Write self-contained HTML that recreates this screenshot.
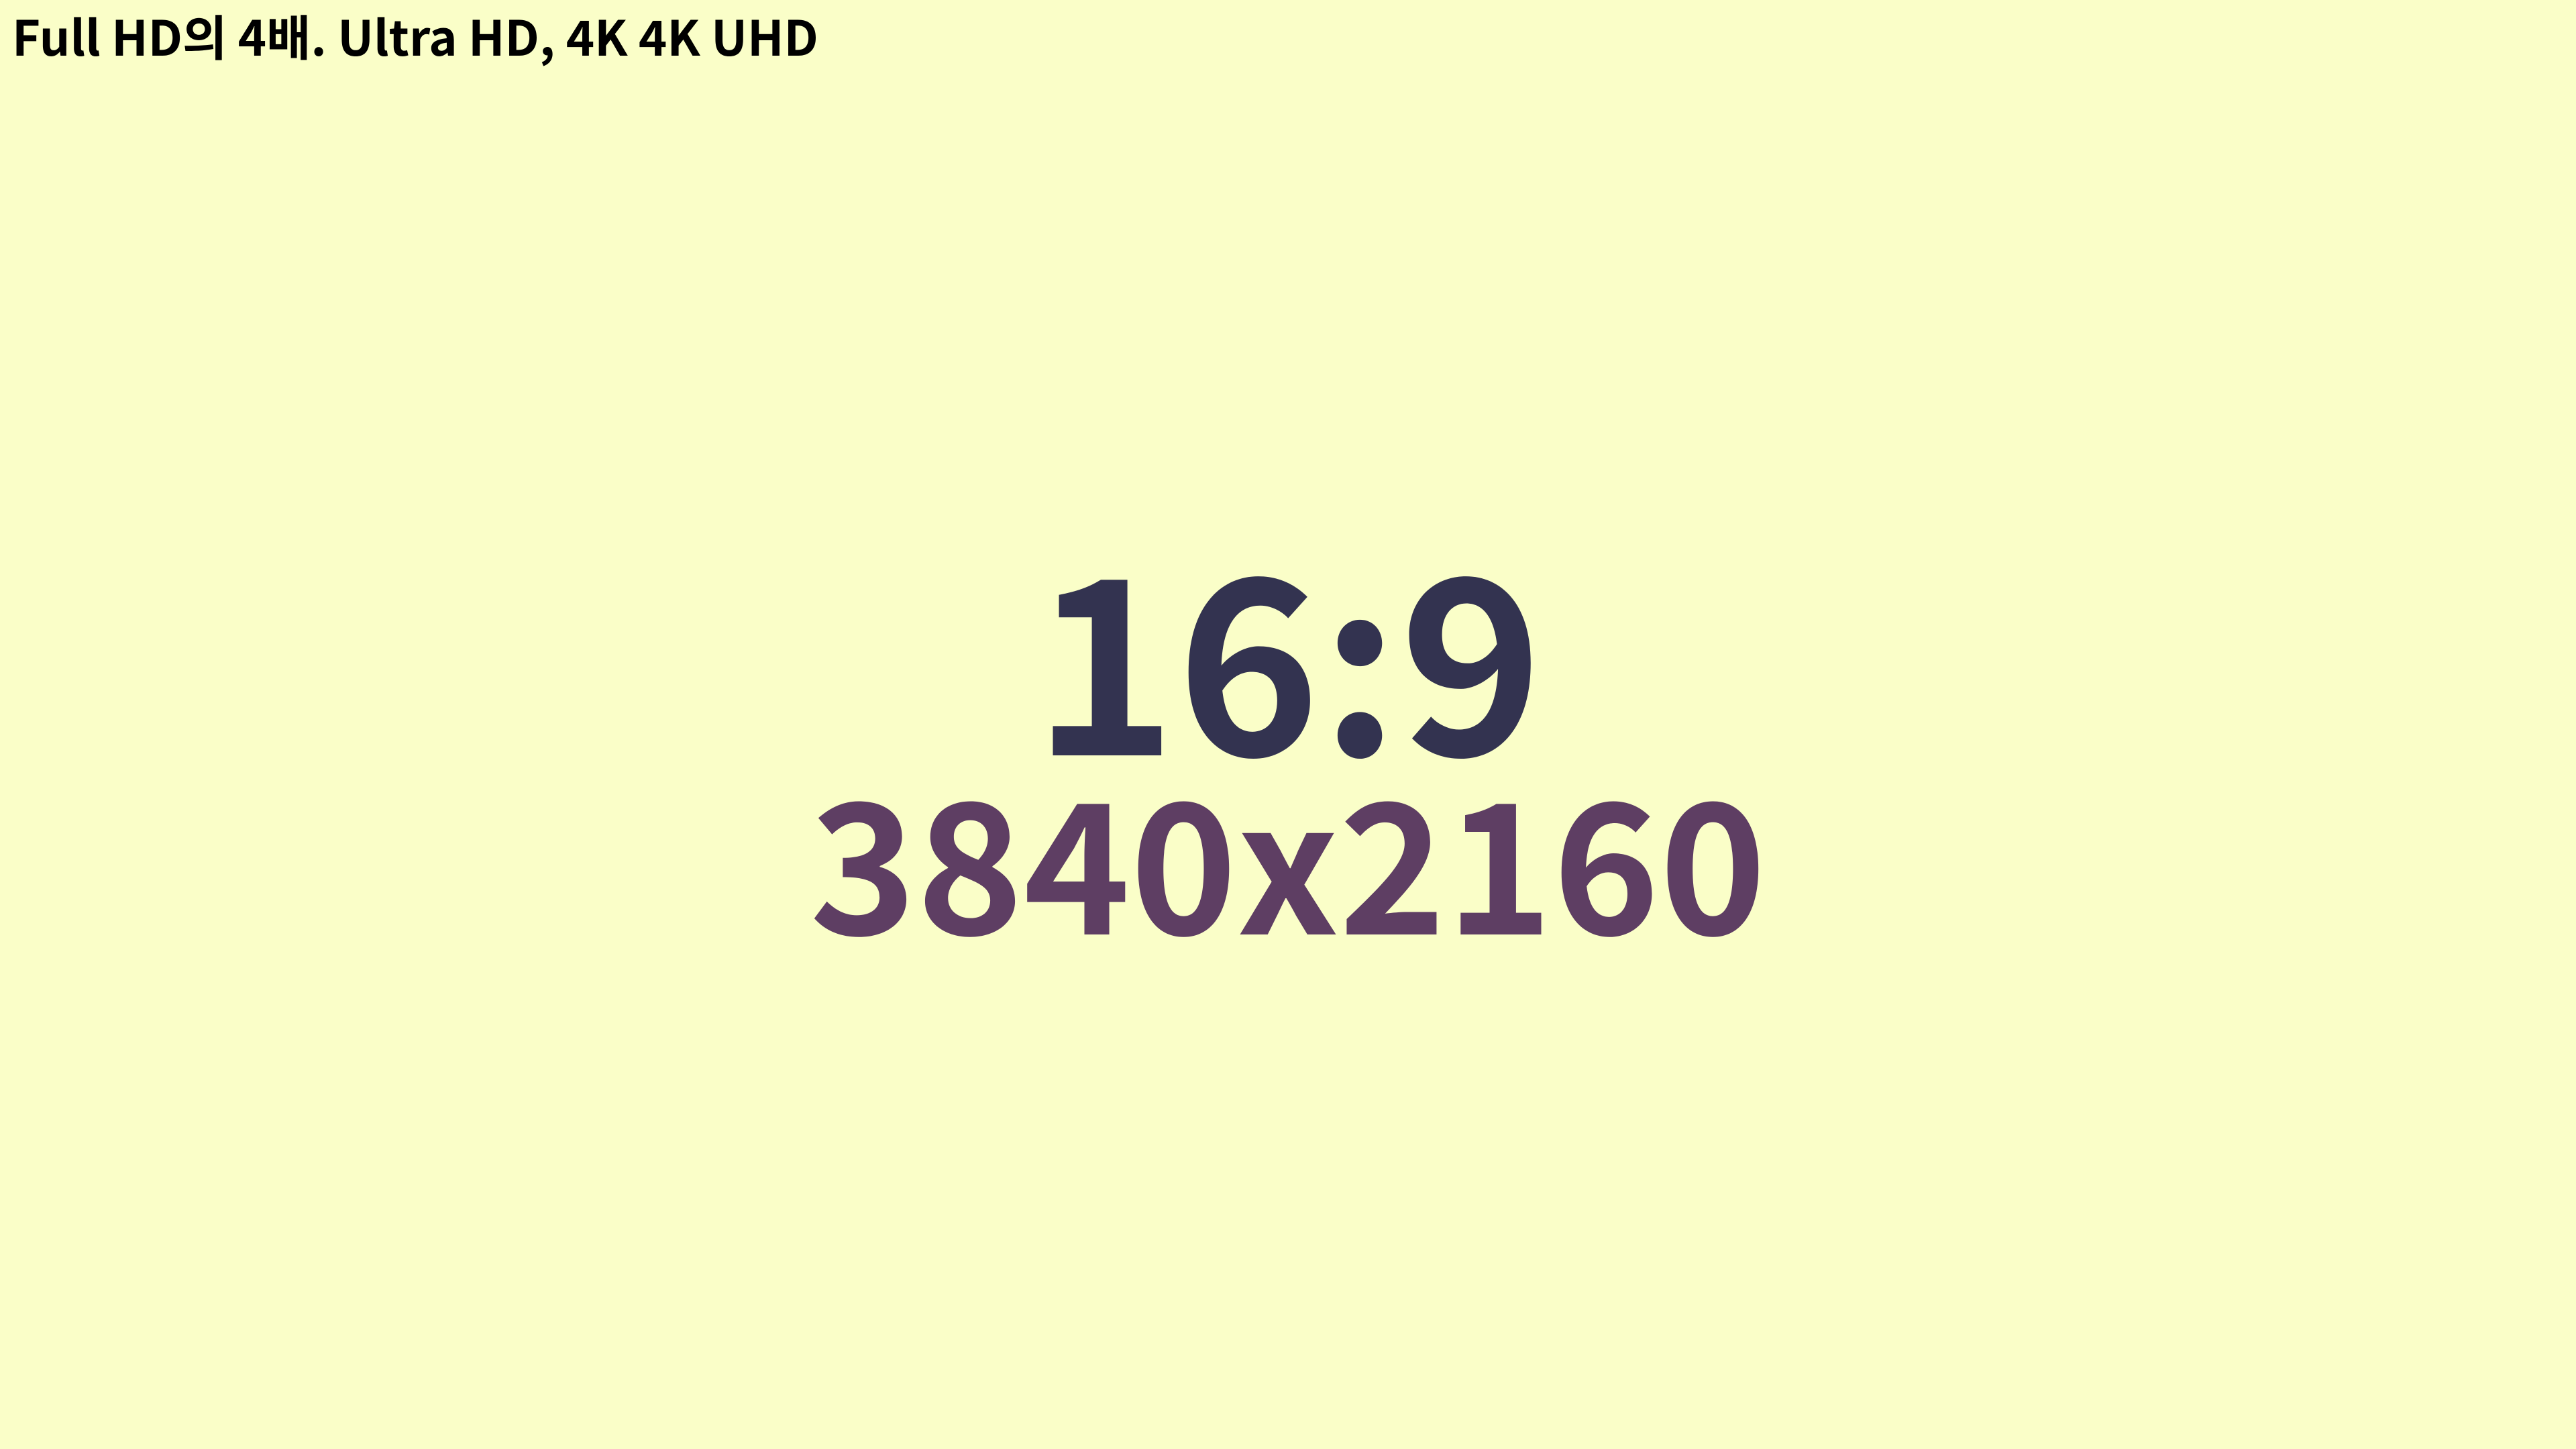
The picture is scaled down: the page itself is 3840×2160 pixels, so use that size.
<!DOCTYPE html>
<html><head><meta charset="utf-8"><style>
html,body{margin:0;padding:0}
body{width:3840px;height:2160px;background:#fafec8;position:relative;overflow:hidden;font-family:"Liberation Sans","Noto Sans CJK KR",sans-serif;}
.t{position:absolute;font-family:"Noto Sans CJK KR","Liberation Sans",sans-serif;font-weight:700;line-height:1;white-space:nowrap}
#top{left:18px;top:16px;font-size:72px;color:#000}
#a{left:0;width:3840px;text-align:center;top:787px;font-size:363px;color:#333350}
#b{left:0;width:3840px;text-align:center;top:1141px;font-size:270px;color:#5e3e63}
</style></head><body>
<div class="t" id="top">Full HD의 4배. Ultra HD, 4K 4K UHD</div>
<div class="t" id="a">16:9</div>
<div class="t" id="b">3840x2160</div>
</body></html>
